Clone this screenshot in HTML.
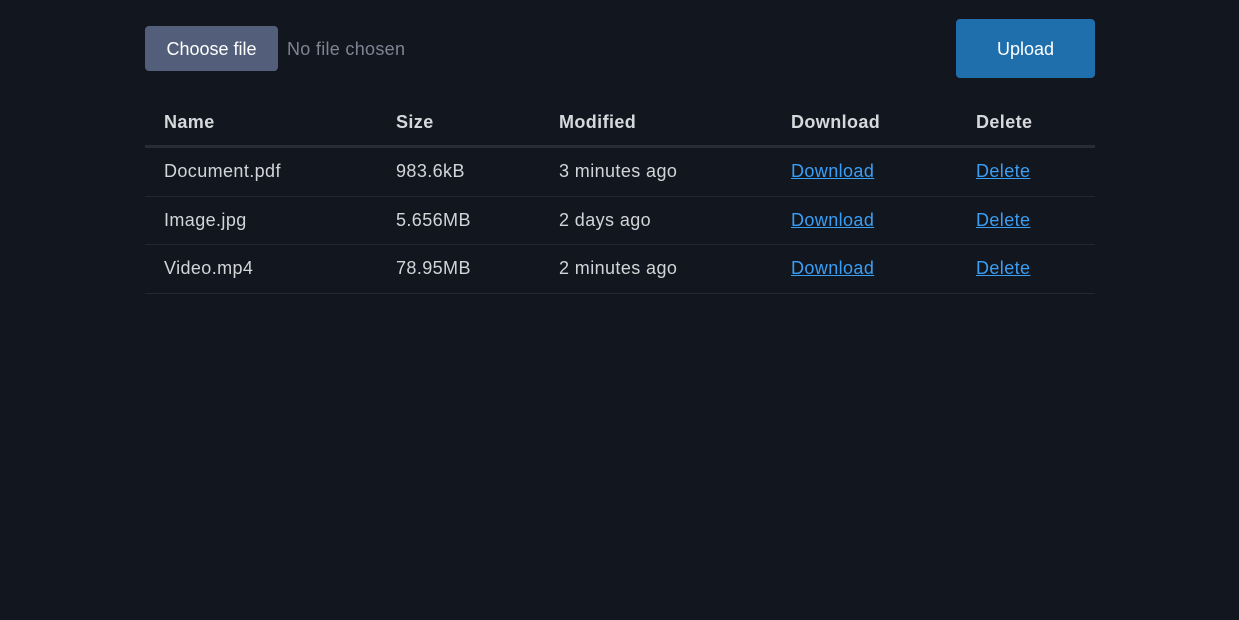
<!DOCTYPE html>
<html><head><style>
body{margin:0;background:#12161e;font-family:"Liberation Sans",sans-serif;width:1239px;height:620px;overflow:hidden;color:#d2d4d8}
.cf{position:absolute;left:145px;top:26px;width:133px;height:45px;background:#535f7a;border-radius:4px;color:#fff;font-size:18px;line-height:46px;text-align:center}
.nf{position:absolute;left:287px;top:26px;line-height:46px;font-size:18px;color:#7d8593;letter-spacing:0.3px}
.up{position:absolute;left:956px;top:19px;width:139px;height:59px;background:#1f6fad;border-radius:4px;color:#fff;font-size:18px;line-height:61px;text-align:center}
table{position:absolute;left:145px;top:99px;width:950px;border-collapse:collapse;font-size:18px;letter-spacing:0.4px}
th{text-align:left;font-weight:bold;height:46px;padding:0 0 0 19px;border-bottom:3px solid #272c36;color:#d6d8dc}
td{height:47.5px;padding:0 0 0 19px;border-bottom:1px solid #232832}
a{color:#3b9ef5;text-decoration:underline}
</style></head><body>
<div class="cf">Choose file</div><div class="nf">No file chosen</div>
<div class="up">Upload</div>
<table>
<tr><th style="width:213px">Name</th><th style="width:144px">Size</th><th style="width:213px">Modified</th><th style="width:166px">Download</th><th>Delete</th></tr>
<tr><td>Document.pdf</td><td>983.6kB</td><td>3 minutes ago</td><td><a>Download</a></td><td><a>Delete</a></td></tr>
<tr><td>Image.jpg</td><td>5.656MB</td><td>2 days ago</td><td><a>Download</a></td><td><a>Delete</a></td></tr>
<tr><td>Video.mp4</td><td>78.95MB</td><td>2 minutes ago</td><td><a>Download</a></td><td><a>Delete</a></td></tr>
</table>
</body></html>
